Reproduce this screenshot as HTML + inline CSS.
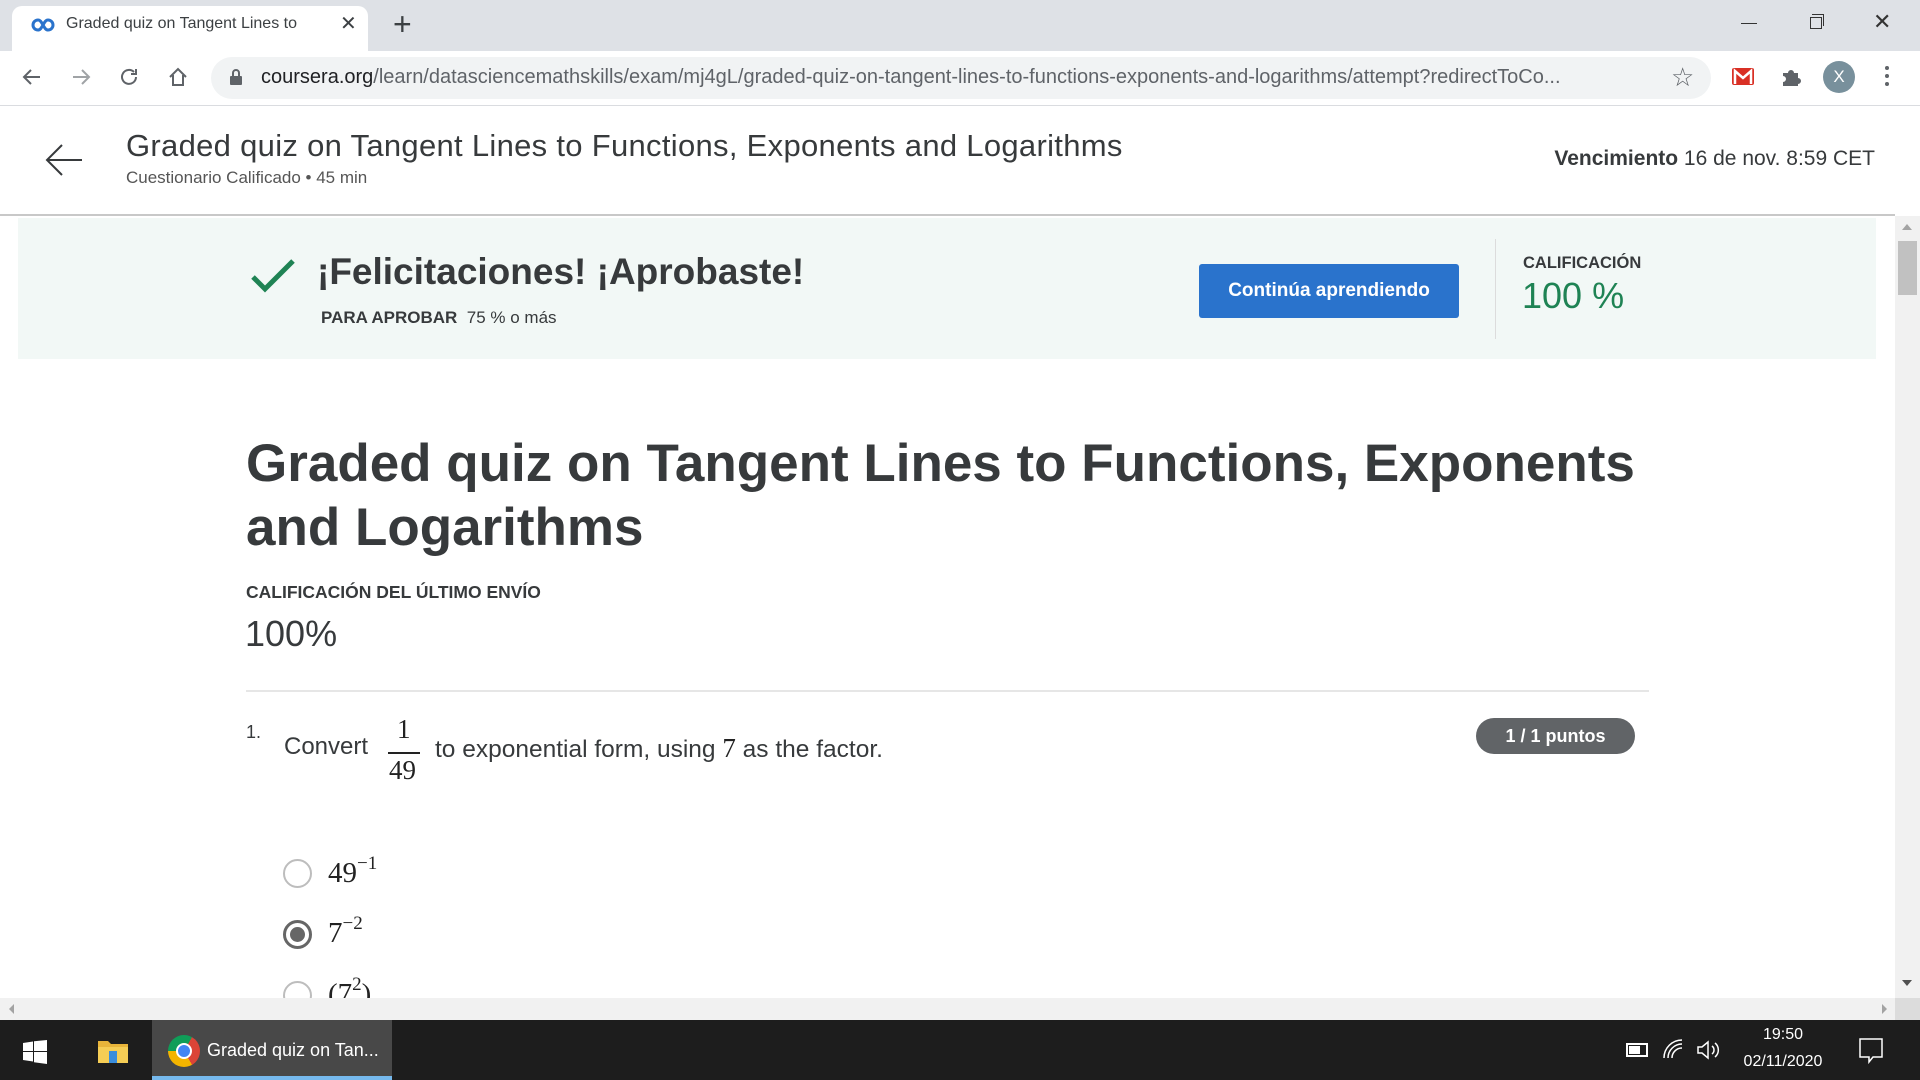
<!DOCTYPE html>
<html><head><meta charset="utf-8"><style>
*{box-sizing:border-box;margin:0;padding:0}
body{width:1920px;height:1080px;overflow:hidden;background:#fff;font-family:"Liberation Sans",sans-serif;position:relative;color:#373a3c}
.a{position:absolute;white-space:nowrap}
.serif{font-family:"Liberation Serif",serif}
</style></head><body>
<!-- tab bar -->
<div class="a" style="left:0;top:0;width:1920px;height:51px;background:#dee1e6"></div>
<div class="a" style="left:12px;top:6px;width:356px;height:45px;background:#fff;border-radius:10px 10px 0 0"></div>
<svg class="a" style="left:31px;top:17px" width="24" height="16" viewBox="0 0 24 16"><path d="M7 3a5 5 0 1 0 0 10c2 0 3-1.5 5-5s3-5 5-5a5 5 0 1 1 0 10c-2 0-3-1.5-5-5S9 3 7 3z" fill="none" stroke="#2a73cc" stroke-width="3"/></svg>
<div class="a" style="left:66px;top:15px;font-size:16px;color:#3c4043;width:258px;overflow:hidden">Graded quiz on Tangent Lines to</div>
<div class="a" style="left:300px;top:14px;width:30px;height:20px;background:linear-gradient(90deg,rgba(255,255,255,0),#fff)"></div>
<div class="a" style="left:340px;top:11px;font-size:20px;color:#3c4043">✕</div>
<div class="a" style="left:393px;top:6px;font-size:32px;color:#3c4043;font-weight:300">+</div>
<div class="a" style="left:1741px;top:23px;width:16px;height:1px;background:#333"></div>
<div class="a" style="left:1810px;top:17px;width:12px;height:12px;border:1px solid #333"></div>
<div class="a" style="left:1812px;top:14px;width:12px;height:12px;border-top:1px solid #333;border-right:1px solid #333"></div>
<div class="a" style="left:1873px;top:9px;font-size:22px;color:#333">✕</div>
<!-- toolbar -->
<svg class="a" style="left:20px;top:65px" width="24" height="24" viewBox="0 0 24 24"><path d="M20 12H5M11 5l-7 7 7 7" fill="none" stroke="#5f6368" stroke-width="2"/></svg>
<svg class="a" style="left:69px;top:65px" width="24" height="24" viewBox="0 0 24 24"><path d="M4 12h15M13 5l7 7-7 7" fill="none" stroke="#a0a3a6" stroke-width="2"/></svg>
<svg class="a" style="left:117px;top:65px" width="24" height="24" viewBox="0 0 24 24"><path d="M19 12a7 7 0 1 1-2-5" fill="none" stroke="#5f6368" stroke-width="2"/><path d="M19 4v5h-5" fill="none" stroke="#5f6368" stroke-width="2"/></svg>
<svg class="a" style="left:166px;top:65px" width="24" height="24" viewBox="0 0 24 24"><path d="M4 12l8-8 8 8M7 10v10h10V10" fill="none" stroke="#5f6368" stroke-width="2"/></svg>
<div class="a" style="left:211px;top:57px;width:1500px;height:42px;background:#f1f3f4;border-radius:21px"></div>
<svg class="a" style="left:229px;top:68px" width="14" height="18" viewBox="0 0 14 18"><rect x="1" y="8" width="12" height="9" rx="1" fill="#5f6368"/><path d="M4 8V5a3 3 0 0 1 6 0v3" fill="none" stroke="#5f6368" stroke-width="2"/></svg>
<div class="a" style="left:261px;top:66px;font-size:20px;color:#5f6368;width:1390px;overflow:hidden"><span style="color:#202124">coursera.org</span>/learn/datasciencemathskills/exam/mj4gL/graded-quiz-on-tangent-lines-to-functions-exponents-and-logarithms/attempt?redirectToCo...</div>
<div class="a" style="left:1671px;top:62px;font-size:26px;color:#5f6368">☆</div>
<div class="a" style="left:1732px;top:68px;width:22px;height:17px;background:#d93025;border-radius:2px"></div>
<svg class="a" style="left:1732px;top:68px" width="22" height="17"><path d="M3 16V3l8 7 8-7v13" fill="none" stroke="#fff" stroke-width="2.5"/></svg>
<svg class="a" style="left:1780px;top:66px" width="22" height="22" viewBox="0 0 22 22"><path d="M3 7h5a3 3 0 0 1 6 0h4v5a3 3 0 0 1 0 6v2H3v-4a3 3 0 0 0 0-6z" fill="#5f6368"/></svg>
<div class="a" style="left:1823px;top:61px;width:32px;height:32px;border-radius:50%;background:#78909c;color:#fff;font-size:17px;text-align:center;line-height:32px">X</div>
<div class="a" style="left:1885px;top:66px;width:4px;height:4px;border-radius:2px;background:#5f6368;box-shadow:0 8px 0 #5f6368,0 16px 0 #5f6368"></div>
<div class="a" style="left:0;top:105px;width:1920px;height:1px;background:#dadce0"></div>
<!-- header -->
<svg class="a" style="left:44px;top:142px" width="40" height="36" viewBox="0 0 40 36"><path d="M38 18H4M18 3L3 18l15 15" fill="none" stroke="#373a3c" stroke-width="2"/></svg>
<div class="a" style="left:126px;top:128px;font-size:31px;color:#373a3c;letter-spacing:0.3px">Graded quiz on Tangent Lines to Functions, Exponents and Logarithms</div>
<div class="a" style="left:126px;top:168px;font-size:17px;color:#555">Cuestionario Calificado • 45 min</div>
<div class="a" style="right:45px;top:147px;font-size:21px;color:#373a3c"><b>Vencimiento</b> 16 de nov. 8:59 CET</div>
<div class="a" style="left:0;top:214px;width:1895px;height:2px;background:#c8c8c8"></div>
<!-- banner -->
<div class="a" style="left:18px;top:218px;width:1858px;height:141px;background:#f2f8f6"></div>
<svg class="a" style="left:250px;top:258px" width="46" height="36" viewBox="0 0 46 36"><path d="M3 19l12 12L43 3" fill="none" stroke="#1f8354" stroke-width="5"/></svg>
<div class="a" style="left:317px;top:251px;font-size:37px;font-weight:bold;color:#373a3c">¡Felicitaciones! ¡Aprobaste!</div>
<div class="a" style="left:321px;top:308px;font-size:17px;color:#373a3c"><b>PARA APROBAR</b>&nbsp; 75 % o más</div>
<div class="a" style="left:1199px;top:264px;width:260px;height:54px;background:#2a73cc;border-radius:3px;color:#fff;font-weight:bold;font-size:19px;text-align:center;line-height:54px">Continúa aprendiendo</div>
<div class="a" style="left:1495px;top:239px;width:1px;height:100px;background:#dcdcdc"></div>
<div class="a" style="left:1523px;top:254px;font-size:16.5px;font-weight:bold;color:#373a3c">CALIFICACIÓN</div>
<div class="a" style="left:1522px;top:275px;font-size:36px;color:#1f8354">100 %</div>
<!-- vertical scrollbar -->
<div class="a" style="left:1895px;top:216px;width:25px;height:804px;background:#f1f1f1"></div>
<div class="a" style="left:1898px;top:241px;width:19px;height:54px;background:#c1c1c1"></div>
<div class="a" style="left:1902px;top:224px;width:0;height:0;border-left:5px solid transparent;border-right:5px solid transparent;border-bottom:6px solid #a3a3a3"></div>
<div class="a" style="left:1902px;top:980px;width:0;height:0;border-left:5px solid transparent;border-right:5px solid transparent;border-top:6px solid #505050"></div>
<!-- content -->
<div class="a" style="left:246px;top:432px;font-size:53px;font-weight:bold;color:#373a3c;line-height:64px;white-space:normal;width:1440px">Graded quiz on Tangent Lines to Functions, Exponents and Logarithms</div>
<div class="a" style="left:246px;top:582px;font-size:17.5px;font-weight:bold;color:#373a3c">CALIFICACIÓN DEL ÚLTIMO ENVÍO</div>
<div class="a" style="left:245px;top:613px;font-size:36px;color:#373a3c">100%</div>
<div class="a" style="left:246px;top:690px;width:1403px;height:2px;background:#e6e6e6"></div>
<div class="a" style="left:246px;top:722px;font-size:18px;color:#373a3c">1.</div>
<div class="a" style="left:284px;top:733px;font-size:24px;color:#373a3c">Convert</div>
<div class="a serif" style="left:397px;top:714px;font-size:27px;color:#222">1</div>
<div class="a" style="left:388px;top:752px;width:32px;height:2px;background:#222"></div>
<div class="a serif" style="left:389px;top:755px;font-size:27px;color:#222">49</div>
<div class="a" style="left:435px;top:733px;font-size:24.5px;color:#373a3c">to exponential form, using <span class="serif" style="font-size:27px;color:#222">7</span> as the factor.</div>
<div class="a" style="left:1476px;top:718px;width:159px;height:36px;background:#616467;border-radius:18px;color:#fff;font-weight:bold;font-size:18px;text-align:center;line-height:36px">1 / 1 puntos</div>
<div class="a" style="left:283px;top:859px;width:29px;height:29px;border-radius:50%;border:2px solid #bdbdbd"></div>
<div class="a serif" style="left:328px;top:857px;font-size:29px;color:#222">49<span style="font-size:19px;position:relative;top:-13px">−1</span></div>
<div class="a" style="left:283px;top:920px;width:29px;height:29px;border-radius:50%;border:3px solid #666"></div>
<div class="a" style="left:290px;top:927px;width:15px;height:15px;border-radius:50%;background:#666"></div>
<div class="a serif" style="left:328px;top:917px;font-size:29px;color:#222">7<span style="font-size:19px;position:relative;top:-13px">−2</span></div>
<div class="a" style="left:283px;top:981px;width:29px;height:29px;border-radius:50%;border:2px solid #bdbdbd"></div>
<div class="a serif" style="left:328px;top:978px;font-size:29px;color:#222">(7<span style="font-size:19px;position:relative;top:-13px">2</span>)</div>
<!-- horizontal scrollbar -->
<div class="a" style="left:0;top:998px;width:1895px;height:22px;background:#f1f1f1"></div>
<div class="a" style="left:1895px;top:998px;width:25px;height:22px;background:#dcdcdc"></div>
<div class="a" style="left:9px;top:1004px;width:0;height:0;border-top:5px solid transparent;border-bottom:5px solid transparent;border-right:5px solid #a3a3a3"></div>
<div class="a" style="left:1882px;top:1004px;width:0;height:0;border-top:5px solid transparent;border-bottom:5px solid transparent;border-left:5px solid #a3a3a3"></div>
<!-- taskbar -->
<div class="a" style="left:0;top:1020px;width:1920px;height:60px;background:#1d1d1d"></div>
<svg class="a" style="left:23px;top:1040px" width="24" height="24"><path d="M0 3l10-1.5V11H0zM11 1.3L24 0v11H11zM0 12h10v9.5L0 20zM11 12h13v12l-13-1.8z" fill="#fff"/></svg>
<svg class="a" style="left:97px;top:1037px" width="32" height="28"><path d="M1 4h10l3 3h17v19H1z" fill="#e8b43a"/><rect x="1" y="10" width="30" height="16" fill="#f5cd55"/><rect x="12" y="14" width="8" height="12" fill="#3a8ddc"/></svg>
<div class="a" style="left:152px;top:1020px;width:240px;height:60px;background:#484848"></div>
<div class="a" style="left:152px;top:1076px;width:240px;height:4px;background:#76b9ed"></div>
<div class="a" style="left:168px;top:1035px;width:32px;height:32px;border-radius:50%;background:conic-gradient(from 30deg,#db4437 0 120deg,#f4b400 120deg 240deg,#0f9d58 240deg 360deg)"></div>
<div class="a" style="left:176px;top:1043px;width:16px;height:16px;border-radius:50%;background:#4285f4;border:2px solid #fff"></div>
<div class="a" style="left:207px;top:1040px;font-size:18px;color:#fff">Graded quiz on Tan...</div>
<div class="a" style="left:1626px;top:1043px;width:22px;height:14px;border:2px solid #fff"></div>
<div class="a" style="left:1629px;top:1046px;width:11px;height:8px;background:#fff"></div>
<svg class="a" style="left:1662px;top:1038px" width="22" height="22"><path d="M2 20A18 18 0 0 1 20 2M6 20A14 14 0 0 1 20 6M10 20a10 10 0 0 1 10-10" fill="none" stroke="#fff" stroke-width="1.5"/></svg>
<svg class="a" style="left:1696px;top:1039px" width="24" height="22"><path d="M2 8h4l6-5v16l-6-5H2z" fill="none" stroke="#fff" stroke-width="1.5"/><path d="M16 7a5 5 0 0 1 0 8M19 4a9 9 0 0 1 0 14" fill="none" stroke="#fff" stroke-width="1.5"/></svg>
<div class="a" style="left:1740px;top:1026px;width:86px;text-align:center;font-size:16px;color:#fff">19:50</div>
<div class="a" style="left:1732px;top:1053px;width:102px;text-align:center;font-size:16px;color:#fff">02/11/2020</div>
<svg class="a" style="left:1858px;top:1037px" width="26" height="28"><path d="M2 2h22v18H15l-4 5v-5H2z" fill="none" stroke="#fff" stroke-width="1.5"/></svg>
</body></html>
